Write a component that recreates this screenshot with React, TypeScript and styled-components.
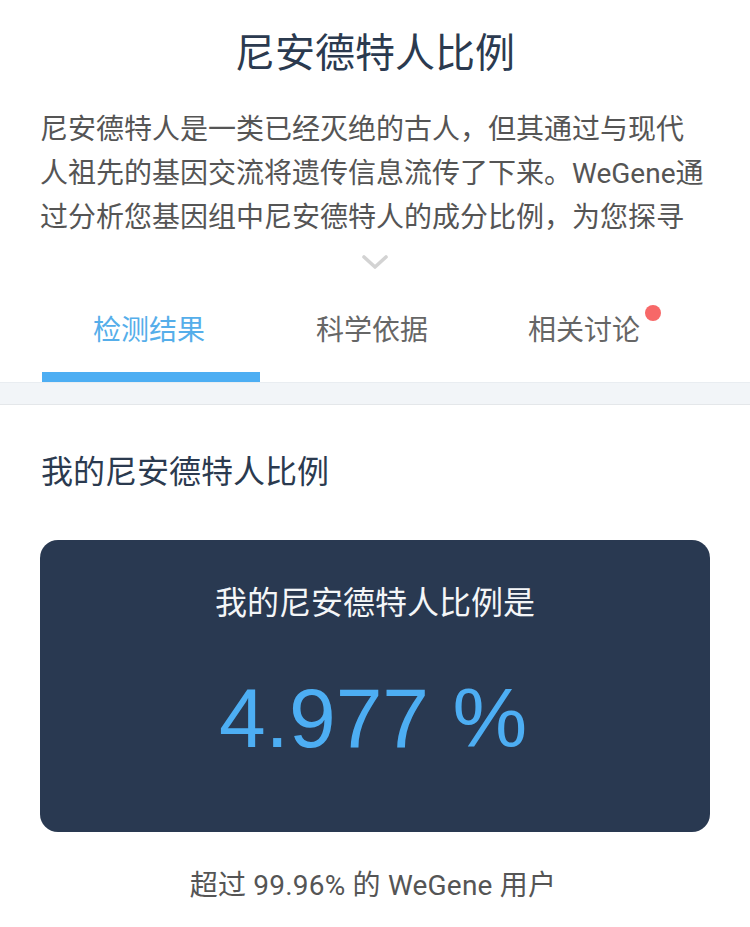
import React from "react";
import styled, { createGlobalStyle } from "styled-components";

const GlobalStyle = createGlobalStyle`
  html, body {
    margin: 0;
    padding: 0;
    background: #ffffff;
  }
  body {
    font-family: Roboto, "Noto Sans CJK SC", "Noto Sans", sans-serif;
    -webkit-font-smoothing: antialiased;
  }
  * { box-sizing: border-box; }
`;

const Page = styled.div`
  width: 750px;
  min-height: 927px;
  background: #ffffff;
  display: flex;
  flex-direction: column;
`;

const Intro = styled.header`
  display: flex;
  flex-direction: column;
  align-items: center;
  padding: 26px 40px 0;
`;

const Title = styled.h1`
  margin: 0;
  font-size: 40px;
  line-height: 56px;
  font-weight: 400;
  color: #2b3a4f;
`;

const Description = styled.p`
  margin: 26px 0 0;
  width: 670px;
  font-size: 28px;
  line-height: 44px;
  color: #555555;
  text-align: left;
`;

const ExpandButton = styled.button`
  margin-top: 14px;
  padding: 0;
  border: 0;
  background: none;
  width: 28px;
  height: 16px;
  display: flex;
  align-items: center;
  justify-content: center;
  cursor: pointer;
`;

const Tabs = styled.nav`
  margin-top: 41px;
  padding: 0 42px;
  display: grid;
  grid-template-columns: repeat(3, 218px);
  column-gap: 5px;
`;

const Tab = styled.div<{ $active?: boolean }>`
  display: flex;
  flex-direction: column;
  align-items: center;
  font-size: 28px;
  line-height: 40px;
  color: ${(p) => (p.$active ? "#55aeea" : "#666666")};
  &::after {
    content: "";
    display: block;
    align-self: stretch;
    margin-top: 21px;
    height: 10px;
    background: ${(p) => (p.$active ? "#4daef3" : "transparent")};
  }
`;

const TabLabel = styled.span<{ $badge?: boolean }>`
  position: relative;
  margin-right: 4px;
  padding-right: ${(p) => (p.$badge ? "22px" : "0")};
`;

const Badge = styled.span`
  position: absolute;
  right: 1px;
  top: -6px;
  width: 16px;
  height: 16px;
  border-radius: 50%;
  background: #f76868;
`;

const Divider = styled.div`
  height: 23px;
  background: #f2f5f8;
  border-top: 1px solid #e9edf1;
  border-bottom: 1px solid #e4e7ea;
`;

const Result = styled.section`
  padding: 45px 40px 0;
  display: flex;
  flex-direction: column;
`;

const SectionTitle = styled.h2`
  margin: 0;
  padding-left: 1px;
  font-size: 32px;
  line-height: 44px;
  font-weight: 400;
  color: #2b3a4f;
`;

const Card = styled.div`
  margin-top: 46px;
  height: 292px;
  border-radius: 18px;
  background: #293951;
  display: flex;
  flex-direction: column;
  align-items: center;
  padding-top: 41px;
`;

const CardLabel = styled.div`
  font-size: 32px;
  line-height: 44px;
  color: #f4f6f8;
`;

const BigValue = styled.div`
  margin-top: 43px;
  margin-right: 4px;
  font-family: "Liberation Sans", Arial, sans-serif;
  font-size: 84px;
  line-height: 100px;
  color: #4daef3;
`;

const Footnote = styled.p`
  margin: 34px 0 0;
  text-align: center;
  font-size: 28px;
  line-height: 40px;
  letter-spacing: 0.2px;
  color: #555555;
  padding-right: 4px;
`;

const Chevron = () => (
  <svg width="26" height="15" viewBox="0 0 26 15" aria-hidden="true">
    <path
      d="M2 2 L13 12 L24 2"
      fill="none"
      stroke="#d3d3d3"
      strokeWidth="3.6"
      strokeLinecap="round"
      strokeLinejoin="round"
    />
  </svg>
);

const tabs = [
  { label: "检测结果", active: true, badge: false },
  { label: "科学依据", active: false, badge: false },
  { label: "相关讨论", active: false, badge: true },
];

export default function App() {
  return (
    <>
      <GlobalStyle />
      <Page>
        <Intro>
          <Title>尼安德特人比例</Title>
          <Description>
            尼安德特人是一类已经灭绝的古人，但其通过与现代人祖先的基因交流将遗传信息流传了下来。WeGene通过分析您基因组中尼安德特人的成分比例，为您探寻
          </Description>
          <ExpandButton aria-label="展开">
            <Chevron />
          </ExpandButton>
        </Intro>
        <Tabs>
          {tabs.map((t) => (
            <Tab key={t.label} $active={t.active}>
              <TabLabel $badge={t.badge}>
                {t.label}
                {t.badge && <Badge />}
              </TabLabel>
            </Tab>
          ))}
        </Tabs>
        <Divider />
        <Result>
          <SectionTitle>我的尼安德特人比例</SectionTitle>
          <Card>
            <CardLabel>我的尼安德特人比例是</CardLabel>
            <BigValue>4.977 %</BigValue>
          </Card>
          <Footnote>超过 99.96% 的 WeGene 用户</Footnote>
        </Result>
      </Page>
    </>
  );
}
